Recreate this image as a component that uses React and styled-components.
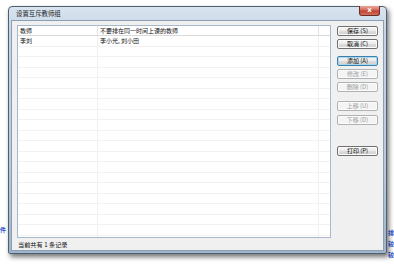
import React from "react";
import styled, { createGlobalStyle } from "styled-components";

const GlobalStyle = createGlobalStyle`
  html, body {
    margin: 0;
    padding: 0;
    background: #ffffff;
  }
  body {
    font-family: "Noto Sans CJK SC", "Liberation Sans", sans-serif;
  }
`;

const Desktop = styled.div`
  position: relative;
  width: 394px;
  height: 264px;
  overflow: hidden;
  background: #ffffff;
`;

const BackText = styled.div`
  position: absolute;
  left: ${(p) => p.x}px;
  top: ${(p) => p.y}px;
  font-size: 6px;
  line-height: 8px;
  font-weight: bold;
  color: #2a4fd0;
  white-space: nowrap;
`;

const Window = styled.div`
  position: absolute;
  left: 8px;
  top: 6px;
  width: 379px;
  height: 248px;
  box-sizing: border-box;
  display: flex;
  flex-direction: column;
  border: 1px solid #4e5f72;
  border-radius: 4px 4px 2px 2px;
  padding: 0 3px 3px 3px;
  background: linear-gradient(180deg, #d9e4ef 0%, #c6d5e5 10%, #bccbdc 60%, #9fb5cb 100%);
  box-shadow: 2px 3px 5px rgba(0, 0, 0, 0.55);
`;

const TitleBar = styled.div`
  position: relative;
  height: 16px;
  display: flex;
  align-items: center;
  padding-left: 4px;
  font-size: 6.4px;
  color: #1c1c1c;
`;

const CloseButton = styled.div`
  position: absolute;
  right: 3px;
  top: -1px;
  width: 21px;
  height: 10px;
  box-sizing: border-box;
  border: 1px solid #6e2d26;
  border-top: none;
  border-radius: 0 0 3px 3px;
  background: linear-gradient(180deg, #e9a99b 0%, #d46a5a 45%, #c0402f 55%, #d2705f 100%);
  display: flex;
  align-items: center;
  justify-content: center;
  color: #ffffff;
  font-family: "DejaVu Sans", sans-serif;
  font-size: 7px;
  font-weight: bold;
  line-height: 1;
`;

const Client = styled.div`
  flex: 1;
  display: grid;
  grid-template-columns: 314px 41px;
  column-gap: 6px;
  padding: 4px 5px 0 5px;
  background: #f0f0f0;
  border: 1px solid #8b9eb3;
  margin: 0 -1px -1px -1px;
`;

const LeftColumn = styled.div`
  display: flex;
  flex-direction: column;
`;

const ListBox = styled.div`
  height: 213px;
  box-sizing: border-box;
  border: 1px solid #a7bacd;
  background: #ffffff;
  overflow: hidden;
`;

const Row = styled.div`
  display: grid;
  grid-template-columns: 80px 221px 1fr;
  height: ${(p) => (p.header ? "10px" : "10.5px")};
  box-sizing: border-box;
  border-bottom: 1px solid ${(p) => (p.header ? "#d9d9d9" : "#f2f2f2")};
`;

const Cell = styled.div`
  border-right: 1px solid ${(p) => (p.header ? "#e2e2e2" : "#f0f0f0")};
  padding-left: 2px;
  font-size: 6px;
  line-height: 9.5px;
  color: #111111;
  white-space: nowrap;
  overflow: hidden;
  &:last-child {
    border-right: none;
  }
`;

const Footer = styled.div`
  height: 12px;
  display: flex;
  align-items: center;
  padding-left: 1px;
  font-size: 6.2px;
  color: #111111;
`;

const ButtonColumn = styled.div`
  display: flex;
  flex-direction: column;
`;

const Button = styled.div`
  margin-top: ${(p) => p.gap}px;
  height: 10px;
  box-sizing: border-box;
  border: 1px solid ${(p) => (p.focused ? "#3c7fb1" : p.disabled ? "#adb2b5" : "#707070")};
  border-radius: 2px;
  background: ${(p) =>
    p.disabled
      ? "#f4f4f4"
      : "linear-gradient(180deg, #f6f6f6 0%, #ebebeb 50%, #dddddd 51%, #cfcfcf 100%)"};
  box-shadow: ${(p) => (p.focused ? "inset 0 0 0 1px #a8d8eb" : "inset 0 0 0 1px #fcfcfc")};
  display: flex;
  align-items: center;
  justify-content: center;
  font-size: 6px;
  line-height: 1;
  color: ${(p) => (p.disabled ? "#a0a0a0" : "#111111")};
  white-space: nowrap;
`;

const rows = [["李刘", "李小光, 刘小田"]];
const EMPTY_ROWS = 19;

const buttons = [
  { label: "保存 (S)", gap: 1 },
  { label: "取消 (C)", gap: 3 },
  { label: "添加 (A)", gap: 7, focused: true },
  { label: "修改 (E)", gap: 3, disabled: true },
  { label: "删除 (D)", gap: 3, disabled: true },
  { label: "上移 (U)", gap: 9, disabled: true },
  { label: "下移 (D)", gap: 4, disabled: true },
  { label: "打印 (P)", gap: 21 },
];

export default function App() {
  return (
    <>
      <GlobalStyle />
      <Desktop>
        <BackText x={0} y={226}>件•</BackText>
        <BackText x={388} y={229}>排</BackText>
        <BackText x={388} y={240}>较</BackText>
        <BackText x={388} y={251}>较</BackText>
        <Window>
          <TitleBar>
            设置互斥教师组
            <CloseButton>x</CloseButton>
          </TitleBar>
          <Client>
            <LeftColumn>
              <ListBox>
                <Row header>
                  <Cell header>教师</Cell>
                  <Cell header>不要排在同一时间上课的教师</Cell>
                  <Cell header />
                </Row>
                {rows.map((r, i) => (
                  <Row key={i}>
                    <Cell>{r[0]}</Cell>
                    <Cell>{r[1]}</Cell>
                    <Cell />
                  </Row>
                ))}
                {Array.from({ length: EMPTY_ROWS }).map((_, i) => (
                  <Row key={"e" + i}>
                    <Cell />
                    <Cell />
                    <Cell />
                  </Row>
                ))}
              </ListBox>
              <Footer>当前共有 1 条记录</Footer>
            </LeftColumn>
            <ButtonColumn>
              {buttons.map((b) => (
                <Button key={b.label} gap={b.gap} disabled={b.disabled} focused={b.focused}>
                  {b.label}
                </Button>
              ))}
            </ButtonColumn>
          </Client>
        </Window>
      </Desktop>
    </>
  );
}
